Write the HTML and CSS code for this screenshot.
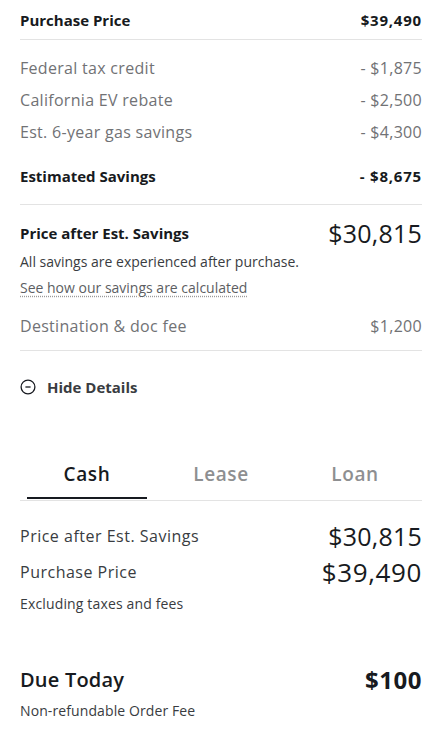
FILE: index.html
```html
<!DOCTYPE html>
<html>
<head>
<meta charset="utf-8">
<link rel="stylesheet" href="styles.css">
</head>
<body>
<div class="page">
  <div class="row head strong"><span>Purchase Price</span><span class="amt">$39,490</span></div>
  <div class="sep"></div>
  <div class="list">
    <div class="row gray"><span>Federal tax credit</span><span>- $1,875</span></div>
    <div class="row gray"><span>California EV rebate</span><span>- $2,500</span></div>
    <div class="row gray"><span>Est. 6-year gas savings</span><span>- $4,300</span></div>
  </div>
  <div class="row est strong"><span>Estimated Savings</span><span class="amt">- $8,675</span></div>
  <div class="sep"></div>
  <div class="row after"><span class="strong">Price after Est. Savings</span><span class="big">$30,815</span></div>
  <div class="note">All savings are experienced after purchase.</div>
  <div class="link">See how our savings are calculated</div>
  <div class="row gray dest"><span>Destination &amp; doc fee</span><span>$1,200</span></div>
  <div class="sep sep-dest"></div>
  <div class="toggle">
    <svg class="icon" viewBox="0 0 16 16" width="16" height="16"><circle cx="8" cy="8" r="6.9" fill="none" stroke="#171a20" stroke-width="1.3"/><line x1="5.4" y1="8" x2="10.6" y2="8" stroke="#171a20" stroke-width="1.3"/></svg>
    <span>Hide Details</span>
  </div>
  <div class="tabs">
    <div class="tab active">Cash</div>
    <div class="tab">Lease</div>
    <div class="tab">Loan</div>
  </div>
  <div class="row cash cash1"><span>Price after Est. Savings</span><span class="big">$30,815</span></div>
  <div class="row cash"><span>Purchase Price</span><span class="big wide">$39,490</span></div>
  <div class="note excl">Excluding taxes and fees</div>
  <div class="row due"><span>Due Today</span><span class="dueamt">$100</span></div>
  <div class="note fee">Non-refundable Order Fee</div>
</div>
</body>
</html>
```
FILE: styles.css
```css
* { box-sizing: border-box; }
html, body { margin: 0; padding: 0; background: #fff; }
body { font-family: "Open Sans", "Liberation Sans", sans-serif; color: #171a20; line-height: 20px; }
.page { padding: 0 17px 0 20px; width: 439px; }
.row { display: flex; justify-content: space-between; align-items: center; font-size: 15px; }
.strong { font-weight: 700; font-size: 15px; color: #171a20; }
.amt { letter-spacing: 0.8px; }
.head { height: 39px; padding-top: 1px; }
.sep { height: 1px; background: #e3e3e3; }
.sep-dest { margin-top: 8px; }
.list { padding-top: 12px; }
.gray { color: #717275; height: 32px; font-size: 16px; letter-spacing: 0.3px; }
.est { height: 56px; padding-bottom: 1px; }
.after { height: 40px; margin-top: 8px; }
.big { font-size: 25px; font-weight: 400; color: #171a20; letter-spacing: 0.2px; line-height: 30px; }
.big.wide { font-size: 26px; letter-spacing: 0.6px; }
.note { font-size: 14px; color: #393c41; line-height: 18px; }
.link { font-size: 14px; color: #5c5e62; line-height: 18px; margin-top: 8px; display: inline-block; text-decoration: underline dotted #9a9a9a; text-underline-offset: 3px; }
.dest { margin-top: 13px; }
.toggle { display: flex; align-items: center; gap: 11px; height: 72px; font-size: 15px; font-weight: 700; color: #393c41; }
.icon { flex: none; }
.tabs { display: flex; margin-top: 39px; border-bottom: 1px solid #e3e3e3; }
.tab { flex: 1; text-align: center; font-size: 19px; font-weight: 600; letter-spacing: 0.6px; color: #8e8f91; line-height: 24px; padding-bottom: 14px; position: relative; }
.tab.active { color: #171a20; }
.tab.active::after { content: ""; position: absolute; left: 7px; right: 7px; bottom: 1px; height: 2px; background: #171a20; }
.cash { height: 36px; color: #393c41; font-size: 16px; letter-spacing: 0.5px; }
.cash1 { margin-top: 17px; }
.excl { margin-top: 5px; letter-spacing: 0.15px; }
.due { margin-top: 52px; font-size: 20px; font-weight: 600; height: 30px; letter-spacing: 0.2px; }
.dueamt { font-size: 24px; font-weight: 700; letter-spacing: 0.5px; }
.fee { margin-top: 7px; letter-spacing: 0.1px; }
```
